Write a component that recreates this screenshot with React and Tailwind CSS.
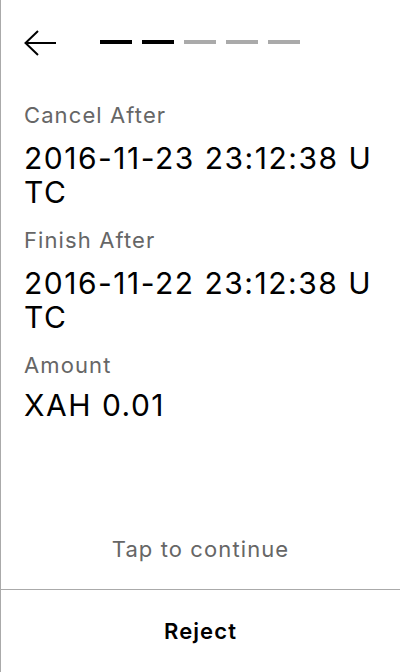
import React from "react";

function Field({ label, value, tight }) {
  return (
    <div className="mb-[17px]">
      <div className="text-[22px] leading-[28px] tracking-wider text-[#666666]">{label}</div>
      <div className={tight ? "mt-[9px] text-[30px] leading-[34px] tracking-wider text-black break-all" : "mt-[12px] text-[30px] leading-[34px] tracking-wider text-black break-all"}>{value}</div>
    </div>
  );
}

export default function App() {
  const steps = [true, true, false, false, false];
  return (
    <div className="w-[400px] h-[672px] bg-white border-l border-[#aaaaaa] flex flex-col font-['Inter',sans-serif]">
      <div className="flex items-center pl-[23px] pt-[30px] h-[56px]">
        <svg width="32" height="26" viewBox="0 0 32 26" fill="none" className="shrink-0">
          <path d="M32 13H1.5M14 1L1.5 13L14 25" stroke="#000" strokeWidth="2" />
        </svg>
        <div className="ml-[44px] flex gap-[10px] -mt-[2px]">
          {steps.map((on, i) => (
            <div key={i} className={on ? "w-8 h-1 bg-black" : "w-8 h-1 bg-[#aaaaaa]"} />
          ))}
        </div>
      </div>
      <div className="pl-[23px] pr-6 mt-[45px]">
        <Field label="Cancel After" value="2016-11-23 23:12:38 UTC" />
        <Field label="Finish After" value="2016-11-22 23:12:38 UTC" />
        <Field label="Amount" value="XAH 0.01" tight />
      </div>
      <div className="flex-1" />
      <div className="text-center text-[22px] leading-[28px] tracking-wider text-[#666666] pb-[26px]">Tap to continue</div>
      <div className="border-t border-[#aaaaaa] h-[83px] flex items-center justify-center">
        <span className="text-[22px] leading-[28px] tracking-wider font-semibold text-black">Reject</span>
      </div>
    </div>
  );
}
